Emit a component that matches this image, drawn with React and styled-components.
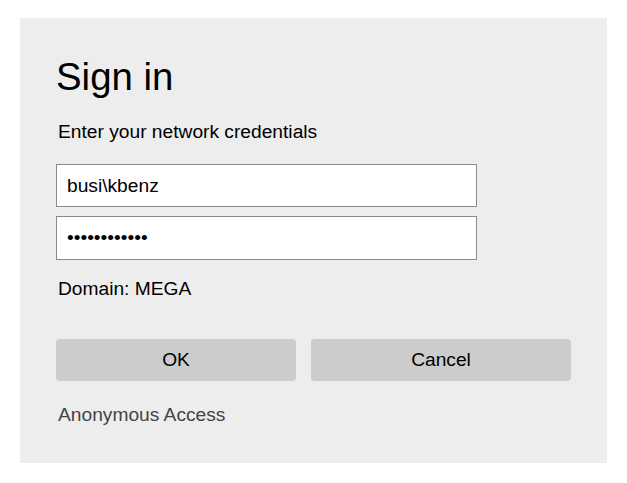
import React from "react";
import styled, { createGlobalStyle } from "styled-components";

const Global = createGlobalStyle`
  html, body { margin: 0; padding: 0; background: #ffffff; }
  body { font-family: "Liberation Sans", Arial, sans-serif; }
`;

const Page = styled.div`
  padding: 18px 20px;
  width: 587px;
`;

const Panel = styled.form`
  box-sizing: border-box;
  width: 587px;
  height: 445px;
  background: #ededed;
  padding: 37px 36px 0 36px;
  display: flex;
  flex-direction: column;
  align-items: flex-start;
`;

const Title = styled.h1`
  margin: 0;
  font-size: 38.4px;
  font-weight: 400;
  line-height: 44px;
  color: #000;
`;

const Text = styled.p`
  margin: ${(p) => p.$top}px 0 0 2px;
  font-size: 19.2px;
  line-height: 22px;
  color: ${(p) => (p.$muted ? "#444444" : "#000000")};
`;

const Field = styled.input`
  box-sizing: border-box;
  display: block;
  width: 421px;
  height: ${(p) => p.$h}px;
  margin: ${(p) => p.$top}px 0 0 0;
  padding: 0 10px;
  border: 1px solid #8a8a8a;
  border-radius: 0;
  background: #ffffff;
  font-family: "Liberation Sans", Arial, sans-serif;
  font-size: 19.2px;
  color: #000;
  outline: none;
`;

const Buttons = styled.div`
  display: flex;
  gap: 15px;
  margin-top: 39px;
`;

const Button = styled.button`
  box-sizing: border-box;
  width: ${(p) => p.$w}px;
  height: 42px;
  border: none;
  border-radius: 4px;
  background: #cccccc;
  font-family: "Liberation Sans", Arial, sans-serif;
  font-size: 19.2px;
  color: #000;
  padding: 0;
  cursor: pointer;
`;

export default function App() {
  return (
    <Page>
      <Global />
      <Panel onSubmit={(e) => e.preventDefault()}>
        <Title>Sign in</Title>
        <Text $top={22}>Enter your network credentials</Text>
        <Field $top={21} $h={43} type="text" defaultValue="busi\kbenz" />
        <Field $top={9} $h={44} type="password" defaultValue="............" />
        <Text $top={18}>Domain: MEGA</Text>
        <Buttons>
          <Button $w={240} type="button">OK</Button>
          <Button $w={260} type="button">Cancel</Button>
        </Buttons>
        <Text $top={23} $muted>Anonymous Access</Text>
      </Panel>
    </Page>
  );
}
